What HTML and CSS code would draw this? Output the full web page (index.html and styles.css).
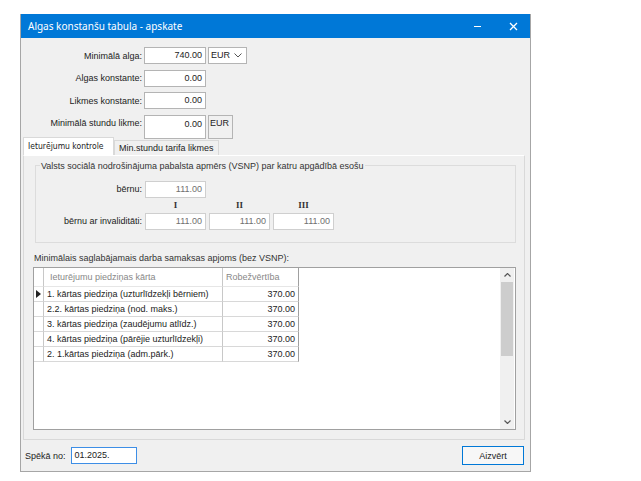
FILE: index.html
```html
<!DOCTYPE html>
<html lang="lv">
<head>
    <meta charset="UTF-8">
    <meta name="viewport" content="width=device-width, initial-scale=1.0">
    <title>Algas konstanšu tabula - apskate</title>
    <link rel="stylesheet" href="styles.css">
</head>
<body>
    <div class="window">
        <div class="titlebar">
            <span class="title">Algas konstanšu tabula - apskate</span>
            <span class="controls">
                <span class="btn-min"></span>
                <svg class="btn-close" width="9" height="9" viewBox="0 0 9 9"><path d="M1 1 L8 8 M8 1 L1 8" stroke="#fff" stroke-width="1.3"/></svg>
            </span>
        </div>

        <div class="content">
            <div class="fields">
                <label>Minimālā alga:</label>
                <div class="input num">740.00</div>
                <div class="select">EUR <svg width="8" height="5" viewBox="0 0 8 5"><path d="M0.5 0.5 L4 4 L7.5 0.5" fill="none" stroke="#555" stroke-width="1"/></svg></div>

                <label>Algas konstante:</label>
                <div class="input num">0.00</div>
                <span></span>

                <label>Likmes konstante:</label>
                <div class="input num">0.00</div>
                <span></span>

                <label class="top">Minimālā stundu likme:</label>
                <div class="input num tall">0.00</div>
                <div class="unit">EUR</div>
            </div>

            <div class="tabs">
                <div class="tab active">Ieturējumu kontrole</div>
                <div class="tab">Min.stundu tarifa likmes</div>
            </div>

            <div class="panel">
                <fieldset class="group">
                    <legend>Valsts sociālā nodrošinājuma pabalsta apmērs (VSNP) par katru apgādībā esošu</legend>
                    <div class="group-grid">
                        <label>bērnu:</label>
                        <div class="input num off">111.00</div>
                        <span></span>
                        <span></span>

                        <span></span>
                        <div class="roman">I</div>
                        <div class="roman">II</div>
                        <div class="roman">III</div>

                        <label>bērnu ar invaliditāti:</label>
                        <div class="input num off">111.00</div>
                        <div class="input num off">111.00</div>
                        <div class="input num off">111.00</div>
                    </div>
                </fieldset>

                <div class="caption">Minimālais saglabājamais darba samaksas apjoms (bez VSNP):</div>

                <div class="grid">
                    <div class="grid-body">
                        <div class="row head">
                            <div class="cell ind"></div>
                            <div class="cell c1">Ieturējumu piedziņas kārta</div>
                            <div class="cell c2">Robežvērtība</div>
                        </div>
                        <div class="row">
                            <div class="cell ind"><svg width="5" height="8" viewBox="0 0 5 8"><path d="M0 0 L5 4 L0 8 Z" fill="#222"/></svg></div>
                            <div class="cell c1">1. kārtas piedziņa (uzturlīdzekļi bērniem)</div>
                            <div class="cell c2 num">370.00</div>
                        </div>
                        <div class="row">
                            <div class="cell ind"></div>
                            <div class="cell c1">2.2. kārtas piedziņa (nod. maks.)</div>
                            <div class="cell c2 num">370.00</div>
                        </div>
                        <div class="row">
                            <div class="cell ind"></div>
                            <div class="cell c1">3. kārtas piedziņa (zaudējumu atlīdz.)</div>
                            <div class="cell c2 num">370.00</div>
                        </div>
                        <div class="row">
                            <div class="cell ind"></div>
                            <div class="cell c1">4. kārtas piedziņa (pārējie uzturlīdzekļi)</div>
                            <div class="cell c2 num">370.00</div>
                        </div>
                        <div class="row">
                            <div class="cell ind"></div>
                            <div class="cell c1">2. 1.kārtas piedziņa (adm.pārk.)</div>
                            <div class="cell c2 num">370.00</div>
                        </div>
                    </div>
                    <div class="scrollbar">
                        <svg class="arrow" width="7" height="4" viewBox="0 0 7 4"><path d="M0.5 3.5 L3.5 0.5 L6.5 3.5" fill="none" stroke="#555" stroke-width="1.2"/></svg>
                        <div class="track"><div class="thumb"></div></div>
                        <svg class="arrow" width="7" height="4" viewBox="0 0 7 4"><path d="M0.5 0.5 L3.5 3.5 L6.5 0.5" fill="none" stroke="#555" stroke-width="1.2"/></svg>
                    </div>
                </div>
            </div>

            <div class="footer">
                <label>Spēkā no:</label>
                <div class="input date">01.2025.</div>
                <div class="spacer"></div>
                <button class="button">Aizvērt</button>
            </div>
        </div>
    </div>
</body>
</html>
```

FILE: styles.css
```css
body {
    margin: 0;
    background-color: #fff;
    font-family: "Liberation Sans", Arial, sans-serif;
    font-size: 9px;
    color: #222;
}
.window {
    margin: 14px 0 0 20px;
    width: 509px;
    height: 457px;
    border: 1px solid #a6a6a6;
    border-top: none;
    background-color: #f0f0f0;
    display: flex;
    flex-direction: column;
}
.titlebar {
    height: 24px;
    flex-shrink: 0;
    background-color: #0078d7;
    color: #fff;
    display: flex;
    align-items: center;
    padding-left: 7px;
    font-family: "Noto Sans", sans-serif;
    font-size: 10px;
}
.title {
    flex: 1;
}
.controls {
    display: flex;
    align-items: center;
}
.btn-min {
    width: 7px;
    height: 1px;
    background-color: #fff;
    margin-right: 28px;
}
.btn-close {
    margin-right: 12px;
}
.content {
    flex: 1;
    display: flex;
    flex-direction: column;
}
.fields {
    display: grid;
    grid-template-columns: 121px 62px 39px;
    grid-template-rows: 17px 17px 17px 23px;
    column-gap: 2px;
    row-gap: 5.5px;
    padding-top: 9px;
    align-items: start;
}
.fields label, .group-grid label, .footer label {
    text-align: right;
    align-self: center;
}
.fields label.top {
    align-self: start;
    line-height: 17px;
}
.input {
    background-color: #fff;
    border: 1px solid #b4b4b4;
    height: 15px;
    line-height: 15px;
    padding: 0 3px;
}
.num {
    text-align: right;
}
.input.tall {
    height: 22px;
    line-height: 16px;
}
.input.off {
    color: #707070;
    border-color: #cfcfcf;
}
.select {
    background-color: #fff;
    border: 1px solid #b4b4b4;
    height: 15px;
    line-height: 15px;
    padding: 0 4px 0 2px;
    display: flex;
    align-items: center;
    justify-content: space-between;
}
.unit {
    width: 22px;
    height: 22px;
    border: 1px solid #b4b4b4;
    line-height: 15px;
    padding-left: 1px;
}
.tabs {
    display: flex;
    align-items: flex-end;
    margin: 0 0 0 2px;
    height: 17px;
    flex-shrink: 0;
}
.tab {
    height: 14px;
    line-height: 14px;
    padding: 0 4px;
    border: 1px solid #d9d9d9;
    border-bottom: none;
    background-color: #f0f0f0;
}
.tab.active {
    height: 17px;
    line-height: 17px;
    background-color: #fff;
    width: 81px;
    font-family: "DejaVu Sans Condensed", sans-serif;
    font-size: 8.5px;
}
.panel {
    flex: 1;
    margin: 0 5px 0 2px;
    border: 1px solid #d9d9d9;
    border-top-color: #fff;
    display: flex;
    flex-direction: column;
}
.group {
    margin: 5px 8px 0 11px;
    padding: 0;
    border: 1px solid #dcdcdc;
}
.group legend {
    margin-left: 4px;
    padding: 0 1px;
    color: #333;
}
.group-grid {
    display: grid;
    grid-template-columns: 106px 61px 61px 61px;
    grid-template-rows: 17px 15px 17px;
    column-gap: 3px;
    padding: 10px 0 12px;
}
.roman {
    text-align: center;
    font-family: "Liberation Serif", serif;
    font-weight: bold;
    font-size: 9px;
    line-height: 15px;
    color: #333;
}
.caption {
    margin: 10px 0 0 10px;
    color: #333;
}
.grid {
    margin: 4px 8px 0 9px;
    height: 161px;
    border: 1px solid #a0a0a0;
    background-color: #fff;
    display: flex;
}
.grid-body {
    flex: 1;
}
.row {
    display: flex;
    height: 15px;
}
.row.head {
    height: 19px;
    color: #888;
}
.cell {
    box-sizing: border-box;
    border-right: 1px solid #c8c8c8;
    border-bottom: 1px solid #d8d8d8;
    padding: 0 3px;
    line-height: 14px;
    white-space: nowrap;
    overflow: hidden;
}
.row.head .cell {
    line-height: 18px;
    border-bottom-color: #e6e6e6;
}
.row.head .c1 {
    padding-left: 6px;
}
.ind {
    width: 10px;
    padding: 0;
    display: flex;
    align-items: center;
    justify-content: center;
}
.c1 {
    width: 179px;
}
.c2 {
    width: 76px;
    border-right-color: #a0a0a0;
}
.scrollbar {
    width: 14px;
    margin-left: auto;
    margin-right: 1px;
    background-color: #f0f0f0;
    display: flex;
    flex-direction: column;
    align-items: center;
}
.arrow {
    margin: 5px 0;
}
.track {
    flex: 1;
    width: 100%;
}
.thumb {
    height: 74px;
    background-color: #cdcdcd;
    margin: 0 1px;
}
.footer {
    height: 31px;
    flex-shrink: 0;
    display: flex;
    align-items: center;
    padding: 0 6px 0 4px;
}
.footer label {
    margin-right: 5px;
}
.input.date {
    width: 58px;
    border-color: #3d8ee6;
    text-align: left;
}
.spacer {
    flex: 1;
}
.button {
    width: 62px;
    height: 19px;
    border: 1px solid #0078d7;
    background-color: #f7f7f7;
    font-family: "Liberation Sans", Arial, sans-serif;
    font-size: 9px;
    color: #222;
    padding: 0;
}
```
